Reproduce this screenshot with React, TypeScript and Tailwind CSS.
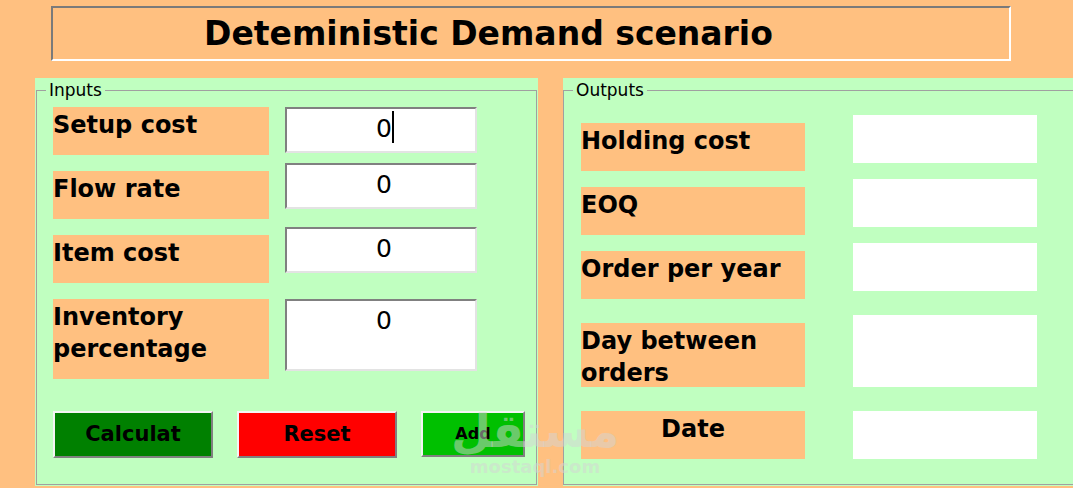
import React from 'react';

const font = "font-['DejaVu_Sans',_'Liberation_Sans',_sans-serif]";

const Label: React.FC<{ text: string; h: number; center?: boolean; mt?: boolean; w: number }> = ({ text, h, center, mt, w }) => (
    <div
        className={`bg-[#FFC080] text-black font-bold text-[24px] leading-[32px] pt-[2px] shrink-0 ${center ? 'text-center' : 'text-left'} ${mt ? 'mt-[8px]' : ''}`}
        style={{ width: w, height: h }}
    >
        {text}
    </div>
);

const InputBox: React.FC<{ h: number; value: string; caret?: boolean }> = ({ h, value, caret }) => (
    <div
        className="relative w-[192px] shrink-0 bg-white border-2 border-t-[#808080] border-l-[#808080] border-b-[#e3e3e3] border-r-[#e3e3e3] text-center text-[25px] leading-[29px] pt-[5px] pl-[6px] text-black"
        style={{ height: h }}
    >
        {value}
        {caret && <span className="absolute left-[105px] top-[2px] w-[2px] h-[32px] bg-black" />}
    </div>
);

const OutBox: React.FC<{ h: number }> = ({ h }) => <div className="w-[184px] shrink-0 bg-white" style={{ height: h }} />;

const Button: React.FC<{ label: string; className: string }> = ({ label, className }) => (
    <button
        className={`flex items-center justify-center border-2 border-t-[#f4f4f4] border-l-[#f4f4f4] border-b-[#808080] border-r-[#808080] font-bold text-black ${className}`}
    >
        {label}
    </button>
);

export default function App() {
    return (
        <div className={`relative w-[1073px] h-[488px] overflow-hidden bg-[#FFC080] ${font}`}>
            {/* title */}
            <div className="pt-[6px] pl-[51px]">
                <div className="w-[960px] h-[55px] border-2 border-t-[#7a7a7a] border-l-[#7a7a7a] border-b-white border-r-white pl-[151px] pt-[6px] text-[33px] leading-[40px] font-bold text-black whitespace-nowrap">
                    Deteministic Demand scenario
                </div>
            </div>

            <div className="flex mt-[17px] pl-[35px] gap-[25px]">
                {/* Inputs */}
                <div className="w-[503px] h-[408px] bg-[#C0FFC0] px-[1px] pt-[2px] pb-[1px] shrink-0">
                    <fieldset className="h-full border border-[#a0a0a0]">
                        <legend className="ml-[9px] px-[3px] text-[17px] leading-[20px] text-black">Inputs</legend>
                        <div className="flex flex-col pl-[16px] pt-[7px]">
                            <div className="flex items-start gap-[16px]">
                                <Label text="Setup cost" h={48} w={216} />
                                <InputBox h={46} value="0" caret />
                            </div>
                            <div className="flex items-start gap-[16px] mt-[8px]">
                                <Label text="Flow rate" h={48} w={216} mt />
                                <InputBox h={46} value="0" />
                            </div>
                            <div className="flex items-start gap-[16px] mt-[8px]">
                                <Label text="Item cost" h={48} w={216} mt />
                                <InputBox h={46} value="0" />
                            </div>
                            <div className="flex items-start gap-[16px] mt-[16px]">
                                <Label text="Inventory percentage" h={80} w={216} />
                                <InputBox h={72} value="0" />
                            </div>
                            <div className="flex items-start gap-[24px] mt-[32px]">
                                <Button label="Calculat" className="w-[160px] h-[47px] bg-[#008000] text-[21px]" />
                                <Button label="Reset" className="w-[160px] h-[47px] bg-[#ff0000] text-[21px]" />
                                <Button label="Add" className="w-[104px] h-[46px] bg-[#00c000] text-[16px]" />
                            </div>
                        </div>
                    </fieldset>
                </div>

                {/* Outputs */}
                <div className="w-[530px] h-[408px] bg-[#C0FFC0] pt-[2px] pb-[1px] shrink-0">
                    <fieldset className="h-full border border-[#a0a0a0]">
                        <legend className="ml-[9px] px-[3px] text-[17px] leading-[20px] text-black">Outputs</legend>
                        <div className="flex flex-col pl-[17px] pt-[15px]">
                            <div className="flex items-start gap-[48px]">
                                <Label text="Holding cost" h={48} w={224} mt />
                                <OutBox h={48} />
                            </div>
                            <div className="flex items-start gap-[48px] mt-[8px]">
                                <Label text="EOQ" h={48} w={224} mt />
                                <OutBox h={48} />
                            </div>
                            <div className="flex items-start gap-[48px] mt-[8px]">
                                <Label text="Order per year" h={48} w={224} mt />
                                <OutBox h={48} />
                            </div>
                            <div className="flex items-start gap-[48px] mt-[16px]">
                                <Label text="Day between orders" h={64} w={224} mt />
                                <OutBox h={72} />
                            </div>
                            <div className="flex items-start gap-[48px] mt-[24px]">
                                <Label text="Date" h={48} w={224} center />
                                <OutBox h={48} />
                            </div>
                        </div>
                    </fieldset>
                </div>
            </div>

            {/* watermark */}
            <div className="pointer-events-none absolute left-[470px] top-[403px] w-[130px] flex flex-col items-center text-[#d4d4d4]/50 font-bold">
                <span className="text-[46px] leading-[56px]">مستقل</span>
                <span className="text-[18px] leading-[20px] -mt-[2px]">mostaql.com</span>
            </div>
        </div>
    );
}
